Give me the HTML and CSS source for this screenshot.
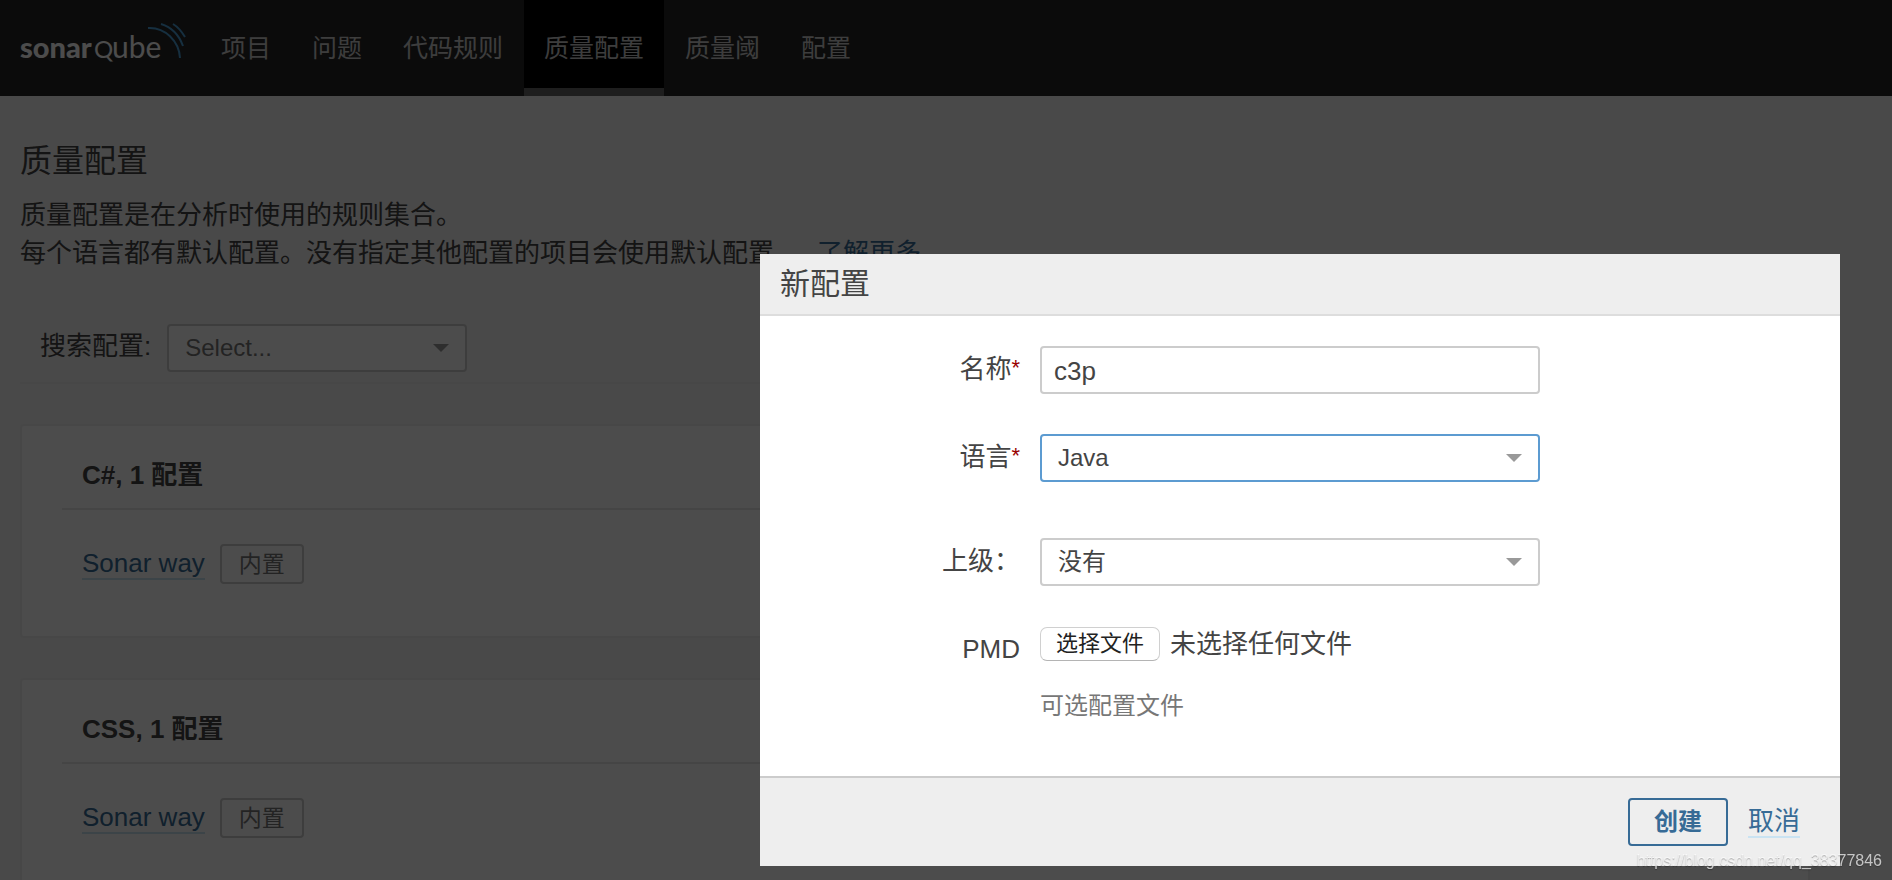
FILE: index.html
```html
<!DOCTYPE html>
<html lang="zh-CN">
<head>
<meta charset="utf-8">
<title>质量配置</title>
<link rel="stylesheet" href="styles.css">
</head>
<body>
<header class="navbar">
  <a class="logo" href="#" aria-label="sonarqube">
    <svg class="logo-svg" width="168" height="50" viewBox="0 0 168 50">
      <text class="logo-bold" x="0" y="36">sonar</text>
      <text class="logo-q" x="74" y="36">Q</text>
      <text class="logo-light" x="92" y="36">ube</text>
      <g fill="none" stroke="#4b9fd5">
        <path stroke-width="2" d="M128 6c17-1 31 13 32 30"/>
        <path stroke-width="2" d="M141 2c10 3 18 11 22 22"/>
        <path stroke-width="2" d="M153 2c5 3 9 8 12 13"/>
      </g>
    </svg>
  </a>
  <nav class="menu">
    <a href="#">项目</a>
    <a href="#">问题</a>
    <a href="#">代码规则</a>
    <a class="active" href="#">质量配置</a>
    <a href="#">质量阈</a>
    <a href="#">配置</a>
  </nav>
</header>
<main class="page">
  <h1>质量配置</h1>
  <p class="intro">质量配置是在分析时使用的规则集合。<br>每个语言都有默认配置。没有指定其他配置的项目会使用默认配置。<a href="#">了解更多</a></p>
  <div class="filter">
    <label for="search">搜索配置:</label>
    <select id="search" class="select placeholder"><option>Select...</option></select>
  </div>
  <div class="cards">
    <section class="card">
      <h2>C#, 1 配置</h2>
      <div class="profile"><a href="#">Sonar way</a><span class="badge">内置</span></div>
    </section>
    <section class="card">
      <h2>CSS, 1 配置</h2>
      <div class="profile"><a href="#">Sonar way</a><span class="badge">内置</span></div>
    </section>
  </div>
</main>
<div class="overlay">
  <form class="modal" role="dialog" aria-labelledby="modal-title">
    <h2 class="modal-head" id="modal-title">新配置</h2>
    <div class="modal-body">
      <div class="field">
        <label for="name">名称<em>*</em></label>
        <input id="name" class="input" type="text" value="c3p">
      </div>
      <div class="field field-language">
        <label for="language">语言<em>*</em></label>
        <select id="language" class="select focused"><option>Java</option></select>
      </div>
      <div class="field">
        <label for="parent">上级：</label>
        <select id="parent" class="select"><option>没有</option></select>
      </div>
      <div class="field field-file">
        <label for="pmd">PMD</label>
        <div class="file-column">
          <div class="file">
            <button type="button" id="pmd">选择文件</button>
            <span>未选择任何文件</span>
          </div>
          <p class="note">可选配置文件</p>
        </div>
      </div>
    </div>
    <footer class="modal-foot">
      <button class="submit" type="submit">创建</button>
      <a href="#">取消</a>
    </footer>
  </form>
</div>
<div class="watermark">https://blog.csdn.net/qq_38377846</div>
</body>
</html>
```
FILE: styles.css
```css
* { box-sizing: border-box; }
body {
  margin: 0;
  height: 100vh;
  overflow: hidden;
  background: #f3f3f3;
  color: #444;
  font: 26px/38px "Liberation Sans", "Noto Sans CJK SC", sans-serif;
}
h1, h2, p { margin: 0; font-weight: 400; }
a { color: #376b96; text-decoration: none; }

.navbar { display: flex; height: 96px; background: #262626; }
.logo { padding: 22px 13px 0 20px; }
.logo-svg { display: block; }
.logo-bold { font: 900 29px Lato, sans-serif; fill: #fff; }
.logo-q { font: 400 24px Lato, sans-serif; fill: #fff; }
.logo-light { font: 400 30px Lato, sans-serif; fill: #fff; }
.menu { display: flex; gap: 1px; }
.menu a {
  padding: 0 20px;
  font-size: 25px;
  line-height: 96px;
  color: #ccc;
  border-bottom: 8px solid transparent;
}
.menu .active { background: #000; border-bottom-color: #666; }

.page { padding: 41px 82px 0 20px; }
h1 { font-size: 32px; line-height: 48px; margin-bottom: 11px; }
.intro a { margin-left: 17px; }
.filter {
  display: flex;
  align-items: flex-start;
  gap: 16px;
  margin-top: 52px;
  padding: 0 20px 10px;
  border-bottom: 2px solid #eee;
}
.filter label { padding-top: 3px; }
.filter .select { width: 300px; }

.input, .select {
  appearance: none;
  height: 48px;
  border: 2px solid #ccc;
  border-radius: 4px;
  background-color: #fff;
  color: #444;
  font: inherit;
  outline: 0;
}
.input { padding: 2px 12px 0; }
.select {
  padding: 0 16px;
  font-size: 24px;
  background-image: url("data:image/svg+xml,%3Csvg xmlns='http://www.w3.org/2000/svg' width='16' height='8'%3E%3Cpath d='M0 0h16l-8 8z' fill='%23999'/%3E%3C/svg%3E");
  background-repeat: no-repeat;
  background-position: right 16px center;
}
.placeholder { color: #777; }
.focused { border-color: #5c9bd1; }

.cards { display: grid; gap: 40px; margin-top: 40px; }
.card {
  height: 214px;
  padding: 28px 40px 0;
  background: #fff;
  border: 2px solid #eee;
  border-radius: 4px;
}
.card h2 {
  padding: 2px 20px 14px;
  font-size: 26px;
  font-weight: 700;
  border-bottom: 2px solid #e6e6e6;
}
.profile { display: flex; align-items: center; gap: 15px; padding: 34px 20px 0; }
.profile a { line-height: 30px; border-bottom: 2px solid #cae3f2; }
.badge {
  height: 40px;
  padding: 0 17px;
  border: 2px solid #ccc;
  border-radius: 4px;
  font-size: 23px;
  line-height: 36px;
  color: #777;
}

.overlay { position: fixed; inset: 0; background: rgba(0, 0, 0, .7); }
.modal {
  position: absolute;
  top: 254px;
  left: 760px;
  width: 1080px;
  background: #fff;
}
.modal-head {
  padding: 9px 20px;
  font-size: 30px;
  line-height: 42px;
  background: #eee;
  border-bottom: 2px solid #ddd;
}
.modal-body { padding: 30px 0 51px; }
.field { display: flex; align-items: flex-start; gap: 20px; margin-bottom: 40px; }
.field > label { width: 260px; padding-top: 4px; text-align: right; }
.field em {
  color: #900;
  font-size: 22px;
  font-style: normal;
  line-height: 22px;
  vertical-align: 3px;
}
.field .input, .field .select { width: 500px; }
.field-language { margin-bottom: 56px; }
.field-file { margin-bottom: 0; }
.file { display: flex; align-items: center; gap: 10px; line-height: 36px; }
.file button {
  height: 34px;
  padding: 0 15px;
  border: 1px solid #d0d0d0;
  border-bottom-color: #b4b4b4;
  border-radius: 7px;
  background: #fff;
  color: #222;
  font: 22px/30px "Liberation Sans", "Noto Sans CJK SC", sans-serif;
}
.note { margin-top: 25px; font-size: 24px; color: #777; }
.modal-foot {
  display: flex;
  justify-content: flex-end;
  align-items: center;
  gap: 20px;
  height: 90px;
  padding-right: 40px;
  background: #eee;
  border-top: 2px solid #ccc;
}
.submit {
  width: 100px;
  height: 48px;
  border: 2px solid #376b96;
  border-radius: 4px;
  background: transparent;
  color: #376b96;
  font: inherit;
  font-size: 24px;
  font-weight: 700;
}
.modal-foot a { line-height: 30px; border-bottom: 2px solid #cae3f2; }
.watermark {
  position: fixed;
  right: 10px;
  bottom: 8px;
  font-size: 16px;
  line-height: 22px;
  color: rgba(255, 255, 255, .7);
  text-shadow: 0 1px 1px rgba(0, 0, 0, .3);
}
```
